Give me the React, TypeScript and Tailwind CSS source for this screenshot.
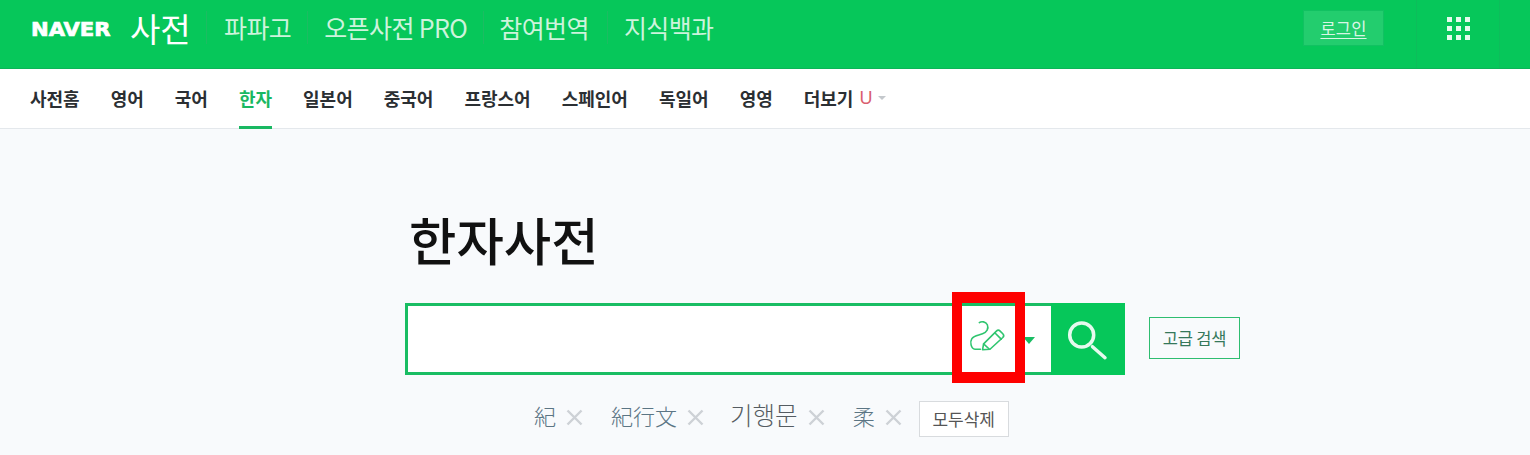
const KR = { fontFamily: '"Noto Sans CJK KR", "Noto Sans", sans-serif' };

const services = [
  { text: "파파고", cls: "pl-[17px] pr-[16px]" },
  { text: "오픈사전 PRO", cls: "pl-[16px] pr-[16px]" },
  { text: "참여번역", cls: "pl-[15px] pr-[18px]" },
  { text: "지식백과", cls: "pl-[16px] pr-[16px]" },
];
const tabs = ["사전홈", "영어", "국어", "한자", "일본어", "중국어", "프랑스어", "스페인어", "독일어", "영영"];
const recent = [
  { text: "紀", cls: "text-[22px] mr-[28px] text-[#5b7584]" },
  { text: "紀行文", cls: "text-[22px] mr-[26px] text-[#5b7584]" },
  { text: "기행문", cls: "text-[24.5px] mr-[28px] text-[#555c62]" },
  { text: "柔", cls: "text-[22px] mr-[17px] text-[#5b7584]" },
];

function HandwriteIcon() {
  return (
    <svg width="64" height="48" viewBox="0 0 60 45" fill="none" stroke="#2fc56f" strokeWidth="1.5" strokeLinecap="round" strokeLinejoin="round">
      <path d="M20 9C22 7.5 26 8 27.5 11C29 14.5 27 18 23 19.5C19 21 15 21 13 24C11 27 12 33.5 16 34L21 34" />
      <path d="M23 34.5L24 29L36 17C37 16 38.5 16 39.5 17L42 19.5C43 20.5 43 22 42 23L30 34Z" />
      <path d="M34.5 18.5L40.5 24.5" />
      <path d="M24 29L29.5 34" />
    </svg>
  );
}

function RemoveIcon() {
  return (
    <svg width="17" height="17" viewBox="0 0 17 17" fill="none" stroke="#cdd1d6" strokeWidth="2.4" className="ml-[10px] mb-[2px]">
      <path d="M1.5 1.5L15.5 15.5M15.5 1.5L1.5 15.5" />
    </svg>
  );
}

export default function App() {
  return (
    <div className="min-h-[455px] bg-[#f8fafc] overflow-hidden relative" style={KR}>
      <header className="h-[69px] bg-[#06c75a] border-b border-[#0bb457] flex items-start text-white">
        <span
          className="ml-[31px] mt-[18px] w-[99px] text-[19px] leading-[22px] font-bold origin-left scale-x-[1.11] [-webkit-text-stroke:0.7px_white]"
          style={{ fontFamily: '"DejaVu Sans", sans-serif' }}
        >
          NAVER
        </span>
        <span className="mt-[6px] text-[33px] leading-[44px] font-normal w-[76px] whitespace-nowrap">사전</span>
        <div className="mt-[11px] flex items-center">
          {services.map((s) => (
            <span
              key={s.text}
              className={`text-[25px] leading-[33px] tracking-[-0.6px] text-[#cdf3dc] whitespace-nowrap border-l border-[#1cbc62] ${s.cls}`}
            >
              {s.text}
            </span>
          ))}
        </div>
        <div className="ml-auto flex h-[68px]">
          <div className="mt-[10px] w-[81px] h-[36px] mr-[32px] bg-[#23cd6e] border border-[#12c162] flex items-center justify-center text-[16.5px] text-[#d9f6e5] underline underline-offset-[3px] tracking-[0.2px]">
            로그인
          </div>
          <div className="w-[84px] border-x border-[#0dbd5b] pt-[17px] pl-[30px]">
            <div className="grid grid-cols-[5px_5px_5px] gap-[4px]">
              {Array.from({ length: 9 }).map((_, i) => (
                <span key={i} className="w-[5px] h-[5px] bg-[#e6faee]" />
              ))}
            </div>
          </div>
          <div className="w-[30px]" />
        </div>
      </header>

      <nav className="h-[60px] bg-white border-b border-[#e4e8ec] flex pl-[30px] text-[18px] font-bold text-[#2b2f33]">
        {tabs.map((t) => (
          <span
            key={t}
            className={`mr-[31px] h-[60px] pt-[15px] leading-[28px] whitespace-nowrap ${t === "한자" ? "text-[#19b862] border-b-[3px] border-[#19b862]" : ""}`}
          >
            {t}
          </span>
        ))}
        <span className="pt-[15px] leading-[28px] whitespace-nowrap">더보기</span>
        <span className="ml-[6px] pt-[15px] leading-[28px] font-normal text-[#d9606f]" style={{ fontFamily: '"Liberation Sans", sans-serif' }}>
          U
        </span>
        <span className="ml-[6px] mt-[27px] w-0 h-0 border-x-[4px] border-x-transparent border-t-[4px] border-t-[#c4c8cc]" />
      </nav>

      <main className="pl-[405px]">
        <h1 className="ml-[4px] mt-[75px] text-[51.5px] leading-[70px] font-medium text-[#111]">한자사전</h1>
        <div className="mt-[29px] flex items-center">
          <div className="w-[720px] h-[72px] border-[3px] border-[#19bd63] bg-white flex relative">
            <div className="flex-1" />
            <div className="absolute left-[550px] top-[7px]">
              <HandwriteIcon />
            </div>
            <div className="self-center mt-[3px] mr-[16px] w-0 h-0 border-x-[6px] border-x-transparent border-t-[7px] border-t-[#19bd63]" />
            <div className="w-[74px] -my-[3px] -mr-[3px] bg-[#06c75a]">
              <svg width="74" height="72" viewBox="0 0 74 72" fill="none" stroke="#e6faee" strokeWidth="3.5" strokeLinecap="round">
                <circle cx="30.7" cy="32" r="12" />
                <path d="M41.5 43.7L54 54.7" />
              </svg>
            </div>
          </div>
          <div className="ml-[24px] mb-[2px] w-[91px] h-[42px] border border-[#2ebd70] flex items-center justify-center text-[16.5px] text-[#35785a] tracking-[-0.2px]">
            고급 검색
          </div>
        </div>
        <div className="mt-[25px] ml-[129px] flex items-center h-[37px]">
          {recent.map((r) => (
            <div key={r.text} className={`flex items-center ${r.cls}`}>
              <span className="leading-[30px] font-light mb-[8px]">{r.text}</span>
              <RemoveIcon />
            </div>
          ))}
          <div className="w-[90px] h-[36px] mt-[1px] bg-white border border-[#d8dbde] flex items-center justify-center text-[17px] text-[#555]">
            모두삭제
          </div>
        </div>
      </main>

      <div className="absolute left-[952px] top-[292px] w-[73px] h-[91px] border-x-[10px] border-y-[11px] border-[#fe0000]" />
    </div>
  );
}
